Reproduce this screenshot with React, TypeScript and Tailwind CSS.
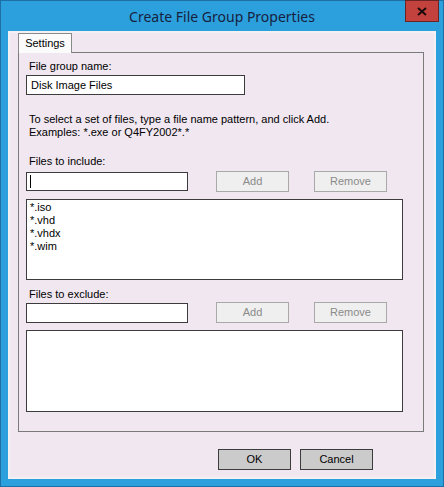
import React from "react";

const font = { fontFamily: '"Liberation Sans", Arial, sans-serif' };

function TextBox({ w, value }: { w: string; value?: string }) {
  return (
    <div className={`${w} h-[20px] bg-white border border-[#3c3c3c] flex items-center pl-[4px] text-[11px] leading-[13px] text-black`}>
      {value}
    </div>
  );
}

function DisabledBtn({ label }: { label: string }) {
  return (
    <div className="w-[73px] h-[21px] bg-[#efefef] border border-[#a9a9a9] flex items-center justify-center text-[11px] text-[#8a8a8a]">
      {label}
    </div>
  );
}

function Btn({ label }: { label: string }) {
  return (
    <div className="w-[73px] h-[21px] bg-[#cbcbcb] border border-[#3c3c3c] flex items-center justify-center text-[11px] text-black">
      {label}
    </div>
  );
}

export default function App() {
  return (
    <div className="w-[444px] h-[487px] bg-[#2ba0dc] border border-[#1d6fa5] flex flex-col relative" style={font}>
      {/* title bar */}
      <div className="h-[30px] flex items-center justify-center relative">
        <span
          className="text-[14px] text-[#17213f] mt-[1px]"
          style={{ fontFamily: '"Noto Sans", "Open Sans", sans-serif' }}
        >
          Create File Group Properties
        </span>
      </div>
      <div className="absolute left-[404px] top-[-1px] w-[34px] h-[22px] bg-[#c4423d] border border-[#6b2323] flex items-center justify-center">
        <svg width="10" height="9" viewBox="0 0 10 9">
          <path d="M1 1 L9 8 M9 1 L1 8" stroke="#1a0a0a" strokeWidth="2" />
        </svg>
      </div>

      {/* client */}
      <div className="mx-[7px] h-[448px] bg-[#f0e7f0] border-2 border-[#f3f1f3] flex flex-col">
        {/* tab */}
        <div className="flex h-[19px] pl-[8px] items-start">
          <div className="w-[54px] h-[20px] bg-[#fbfbfb] border border-b-0 border-[#8a8a8a] flex items-center justify-center text-[11px] text-black relative z-10">
            Settings
          </div>
        </div>
        {/* panel */}
        <div className="ml-[8px] w-[406px] h-[380px] border border-[#7a7a7a] flex flex-col pl-[7px] pt-[7px]">
          <div className="text-[11px] leading-[13px] text-black pl-[3px]">File group name:</div>
          <div className="mt-[2px]">
            <TextBox w="w-[219px]" value="Disk Image Files" />
          </div>
          <div className="mt-[18px] text-[11px] leading-[13px] text-black pl-[3px]">
            <div>To select a set of files, type a file name pattern, and click Add.</div>
            <div>Examples: *.exe or Q4FY2002*.*</div>
          </div>
          <div className="mt-[16px] text-[11px] leading-[13px] text-black pl-[3px]">Files to include:</div>
          <div className="mt-[3px] flex items-center h-[21px]">
            <div className="h-[19px] w-[162px] bg-white border border-[#3c3c3c] flex items-center pl-[3px]">
              <div className="w-px h-[13px] bg-black" />
            </div>
            <div className="ml-[28px]">
              <DisabledBtn label="Add" />
            </div>
            <div className="ml-[25px]">
              <DisabledBtn label="Remove" />
            </div>
          </div>
          <div className="mt-[7px] w-[377px] h-[81px] bg-white border border-[#3c3c3c] pl-[3px] pt-[1px] text-[11px] leading-[13px] text-black">
            <div>*.iso</div>
            <div>*.vhd</div>
            <div>*.vhdx</div>
            <div>*.wim</div>
          </div>
          <div className="mt-[8px] text-[11px] leading-[13px] text-black pl-[3px]">Files to exclude:</div>
          <div className="mt-[1px] flex items-center h-[21px]">
            <div className="h-[20px] w-[162px] bg-white border border-[#3c3c3c]" />
            <div className="ml-[28px]">
              <DisabledBtn label="Add" />
            </div>
            <div className="ml-[25px]">
              <DisabledBtn label="Remove" />
            </div>
          </div>
          <div className="mt-[7px] w-[377px] h-[82px] bg-white border border-[#3c3c3c]" />
        </div>
        {/* bottom buttons */}
        <div className="mt-[17px] flex pl-[208px] gap-[9px]">
          <Btn label="OK" />
          <Btn label="Cancel" />
        </div>
      </div>
    </div>
  );
}
